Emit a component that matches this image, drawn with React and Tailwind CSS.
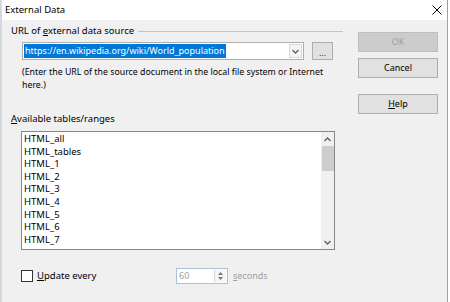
import React from "react";

const items = [
  "HTML_all",
  "HTML_tables",
  "HTML_1",
  "HTML_2",
  "HTML_3",
  "HTML_4",
  "HTML_5",
  "HTML_6",
  "HTML_7",
];

function Chevron({ up }) {
  return (
    <svg width="7" height="5" viewBox="0 0 7 5">
      <path
        d={up ? "M0.5 4 L3.5 1 L6.5 4" : "M0.5 1 L3.5 4 L6.5 1"}
        fill="none"
        stroke="#606060"
        strokeWidth="1.3"
      />
    </svg>
  );
}

export default function App() {
  return (
    <div
      className="w-[450px] h-[302px] flex bg-[#f0f0f0] overflow-hidden text-[9px] text-black"
      style={{ fontFamily: '"Noto Sans", "Open Sans", sans-serif' }}
    >
      {/* window behind */}
      <div className="w-[2px] shrink-0 bg-[#d3d9e0]"></div>

      <div className="flex-1 flex flex-col">
        {/* Title bar */}
        <div className="h-[20px] bg-white flex items-center justify-between pl-[3px] pr-[5px]">
          <span className="leading-none text-[9.5px]">External Data</span>
          <svg width="10" height="10" viewBox="0 0 10 10">
            <path d="M0.5 0.5 L9.5 9.5 M9.5 0.5 L0.5 9.5" stroke="#000" strokeWidth="1" />
          </svg>
        </div>

        {/* Body */}
        <div className="flex-1 flex">
          <div className="w-[341px] pl-[9px] pt-[4px] flex flex-col">
            <div className="h-[14px] flex items-center">
              <span className="text-[9.5px]">
                URL of <span className="underline underline-offset-1">e</span>xternal data source
              </span>
              <div className="flex-1 h-px bg-[#c4c4c4] ml-[4px]"></div>
            </div>

            <div className="mt-[4px] ml-[11px] flex items-center">
              <div className="w-[282px] h-[18px] bg-white border border-[#adadad] flex items-stretch">
                <div className="flex-1 flex items-center pl-[1px]">
                  <span className="bg-[#0078d7] text-white leading-[14px] px-[1px] text-[9px]">
                    https://en.wikipedia.org/wiki/World_population
                  </span>
                </div>
                <div className="w-[13px] m-[1px] border border-[#dadada] bg-[#f5f5f5] flex items-center justify-center">
                  <Chevron />
                </div>
              </div>
              <div className="ml-[8px] w-[21px] h-[18px] bg-[#e1e1e1] border border-[#adadad] flex items-end justify-center leading-[12px] text-[#333]">
                ...
              </div>
            </div>

            <div className="mt-[6px] ml-[11px] leading-[13px] whitespace-nowrap text-[8.8px]">
              (Enter the URL of the source document in the local file system or Internet
              <br />
              here.)
            </div>

            <div className="mt-[20px] leading-[13px] text-[9.5px]">
              <span className="underline underline-offset-1">A</span>vailable tables/ranges
            </div>

            <div className="mt-[6px] ml-[10px] w-[314px] h-[119px] bg-white border border-[#828790] flex">
              <div className="flex-1 pl-[2px] pt-[1px] text-[9.5px]">
                {items.map((it) => (
                  <div key={it} className="leading-[12.6px]">
                    {it}
                  </div>
                ))}
              </div>
              <div className="w-[13px] bg-[#f0f0f0] flex flex-col items-center">
                <div className="h-[14px] flex items-center justify-center">
                  <Chevron up />
                </div>
                <div className="w-[12px] h-[25px] bg-[#cdcdcd]"></div>
                <div className="flex-1"></div>
                <div className="h-[14px] flex items-center justify-center">
                  <Chevron />
                </div>
              </div>
            </div>

            <div className="mt-[18px] h-[16px] flex items-center">
              <div className="w-[165px] flex items-center">
                <div className="ml-[10px] w-[12px] h-[12px] bg-white border border-[#333]"></div>
                <span className="ml-[4px] text-[9.5px]">
                  <span className="underline underline-offset-1">U</span>pdate every
                </span>
              </div>
              <div className="w-[52px] h-[16px] bg-white border border-[#a6c0de] flex">
                <span className="flex-1 pl-[2px] leading-[14px] text-[#a0a0a0]">60</span>
                <div className="w-[12px] my-[1px] mr-[1px] border-l border-[#d9d9d9] bg-[#f5f5f5] flex flex-col items-center justify-center gap-[2px]">
                  <svg width="5" height="3" viewBox="0 0 5 3">
                    <path d="M0 3 L2.5 0 L5 3 Z" fill="#777" />
                  </svg>
                  <svg width="5" height="3" viewBox="0 0 5 3">
                    <path d="M0 0 L2.5 3 L5 0 Z" fill="#777" />
                  </svg>
                </div>
              </div>
              <span className="ml-[5px] text-[#a0a0a0]">
                <span className="underline underline-offset-1">s</span>econds
              </span>
            </div>
          </div>

          {/* Buttons */}
          <div className="ml-[15px] pt-[12px] flex flex-col">
            <div className="w-[80px] h-[20px] bg-[#cccccc] border border-[#bfbfbf] text-[#9d9d9d] flex items-center justify-center">
              OK
            </div>
            <div className="mt-[6px] w-[80px] h-[20px] bg-[#e1e1e1] border border-[#adadad] flex items-center justify-center">
              Cancel
            </div>
            <div className="mt-[16px] w-[80px] h-[20px] bg-[#e1e1e1] border border-[#adadad] flex items-center justify-center">
              <span>
                <span className="underline underline-offset-1">H</span>elp
              </span>
            </div>
          </div>
        </div>
      </div>

      <div className="w-[1px] shrink-0 bg-[#8ea4bd]"></div>
      <div className="w-[2px] shrink-0 bg-white"></div>
    </div>
  );
}
